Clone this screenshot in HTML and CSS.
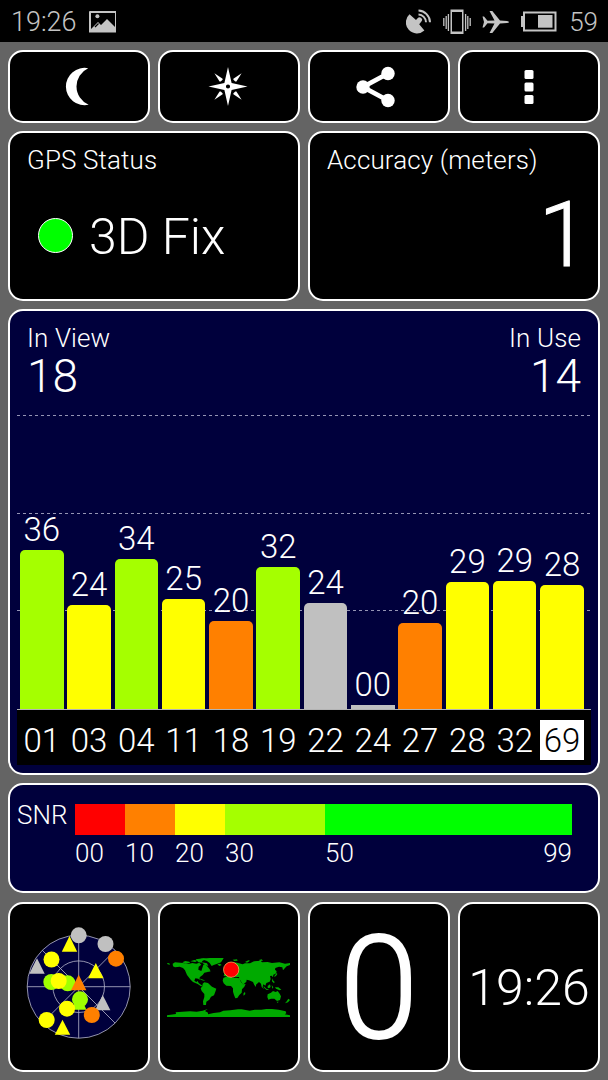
FILE: index.html
```html
<!DOCTYPE html>
<html lang="en">
<head>
    <meta charset="UTF-8">
    <meta name="viewport" content="width=device-width, initial-scale=1.0">
    <title>GPS Status</title>
    <link rel="stylesheet" href="styles.css">
</head>
<body>
    <div class="status-bar">
        <span class="clock">19:26</span>
        <svg class="icon-picture" width="28" height="22" viewBox="0 0 28 22">
            <path fill-rule="evenodd" d="M1 0H27V21.5H0V1Q0 0 1 0ZM2 2V18L9 11L12 14L18 8L26 16V2Z"/>
            <circle cx="8.4" cy="5.2" r="2"/>
            <path d="M6 16L9.5 12.5" stroke="#000" stroke-width="1.2"/>
        </svg>
        <div class="status-icons">
            <svg width="26" height="26" viewBox="0 0 26 26">
                <path d="M3.5 5.2A10.4 10.4 0 0 0 18.4 21.6L13.2 15.2L15.4 12.6A2.3 2.3 0 1 0 11.6 9.2L10 11Z"/>
                <path d="M12.5 5.5A8 8 0 0 1 20 13.2M12.5 1.5A12 12 0 0 1 24 13.2" fill="none" stroke="#c4c4c4" stroke-width="2"/>
            </svg>
            <svg class="icon-vibrate" width="28" height="26" viewBox="0 0 28 26">
                <path fill-rule="evenodd" d="M7.5 0.5H20.5V25H7.5ZM9 3V22.5H19V3Z"/>
                <path d="M0.8 9V17M3.2 7V20M5.4 5V22M27.2 9V17M24.8 7V20M22.6 5V22" stroke="#c4c4c4" stroke-width="1.3"/>
            </svg>
            <svg class="icon-plane" width="27" height="24" viewBox="0 0 27 24">
                <path d="M0.5 6.5H2L5.5 10.7L12.5 10.5L7.5 1H10.3L18 10.5L25 10.9Q27 11.2 27 12Q27 12.8 25 13.1L18 13.5L10.3 23H7.5L12.5 13.5L5.5 13.3L2 17.5H0.5L2 12Z"/>
            </svg>
            <svg class="icon-battery" width="36" height="22" viewBox="0 0 36 22">
                <path fill-rule="evenodd" d="M2 0.5H35.5V20.5H2V16H0V5H2ZM4 2.5V18.5H33.5V2.5Z"/>
                <rect x="17" y="4" width="14.5" height="12.7"/>
            </svg>
            <span class="battery-level">59</span>
        </div>
    </div>

    <div class="dashboard">
        <button class="card tool" type="button" aria-label="Night mode">
            <svg class="icon-moon" width="40" height="40" viewBox="0 0 40 40">
                <path d="M31.2 1.2A18.7 18.7 0 1 0 31.7 37.8A20 20 0 0 1 31.2 1.2Z"/>
            </svg>
        </button>
        <button class="card tool" type="button" aria-label="Compass">
            <svg class="icon-compass" width="40" height="40" viewBox="0 0 40 40">
                <path fill-rule="evenodd" d="M20 0L23.6 16L39.5 19.5L23.6 23L20 39L16.4 23L0.5 19.5L16.4 16ZM20 17.4A2.1 2.1 0 1 0 20 21.6A2.1 2.1 0 1 0 20 17.4Z"/>
                <path d="M6.4 6.2L14.6 11.7L14.6 12.7L12.7 14.6L11.6 14.6Z"/>
                <path d="M33.6 6.2L25.4 11.7L25.4 12.7L27.3 14.6L28.4 14.6Z"/>
                <path d="M6.4 32.8L14.6 27.3L14.6 26.3L12.7 24.4L11.6 24.4Z"/>
                <path d="M33.6 32.8L25.4 27.3L25.4 26.3L27.3 24.4L28.4 24.4Z"/>
            </svg>
        </button>
        <button class="card tool" type="button" aria-label="Share">
            <svg class="icon-share" width="40" height="42" viewBox="0 0 40 42">
                <path d="M32 7.5L7 21L32 34.5" fill="none" stroke="#fff" stroke-width="4.8"/>
                <circle cx="32" cy="7.5" r="6.7"/>
                <circle cx="7" cy="21" r="6.7"/>
                <circle cx="32" cy="34.5" r="6.7"/>
            </svg>
        </button>
        <button class="card tool" type="button" aria-label="Menu">
            <svg width="10" height="36" viewBox="0 0 10 36">
                <rect x="0.5" y="1" width="9" height="9" rx="1.5"/>
                <rect x="0.5" y="13.5" width="9" height="9" rx="1.5"/>
                <rect x="0.5" y="26" width="9" height="9" rx="1.5"/>
            </svg>
        </button>

        <div class="card info">
            <div class="title">GPS Status</div>
            <div class="fix"><span class="fix-dot"></span>3D Fix</div>
        </div>
        <div class="card info">
            <div class="title">Accuracy (meters)</div>
            <div class="accuracy">1</div>
        </div>

        <div class="card chart-card">
            <div class="chart-header">
                <div>
                    <div class="title">In View</div>
                    <div class="count">18</div>
                </div>
                <div class="in-use">
                    <div class="title">In Use</div>
                    <div class="count">14</div>
                </div>
            </div>
            <div class="plot" id="plot"></div>
            <div class="sat-ids" id="sat-ids"></div>
        </div>

        <div class="card snr-card">
            <div class="snr-label">SNR</div>
            <div class="scale">
                <div class="seg red"></div>
                <div class="seg orange"></div>
                <div class="seg yellow"></div>
                <div class="seg lime"></div>
                <div class="seg green"></div>
                <div>00</div>
                <div>10</div>
                <div>20</div>
                <div>30</div>
                <div class="scale-end"><span>50</span><span>99</span></div>
            </div>
        </div>

        <div class="card widget">
            <svg width="138" height="166" viewBox="10 904 138 166">
                <g class="sky">
                    <circle cx="78.7" cy="986.7" r="51.5"/>
                    <circle cx="78.7" cy="986.7" r="25.8"/>
                    <path d="M78.7 935.2V1038.2M27.2 986.7H130.2M42.3 950.3L115.1 1023.1M115.1 950.3L42.3 1023.1"/>
                </g>
                <circle class="s-lime" cx="51.3" cy="982" r="8"/>
                <circle class="s-lime" cx="67.7" cy="983.3" r="8"/>
                <circle class="s-yellow" cx="58.7" cy="981" r="8"/>
                <path class="s-lime" d="M79 994.3L86.5 1009.7H71.5Z"/>
                <circle class="s-lime" cx="80" cy="999.3" r="8"/>
                <path class="s-yellow" d="M69.5 936L77.2 951.7H61.8Z"/>
                <circle class="s-gray" cx="78.7" cy="935.3" r="8"/>
                <circle class="s-gray" cx="105.5" cy="944" r="8"/>
                <circle class="s-orange" cx="116" cy="958.7" r="8"/>
                <circle class="s-yellow" cx="51.5" cy="959.5" r="8"/>
                <path class="s-gray" d="M37 958.3L44.7 973.7H29.3Z"/>
                <path class="s-yellow" d="M95.8 963L103.5 978.3H88.1Z"/>
                <path class="s-orange" d="M78.7 974.8L86.4 990.3H71Z"/>
                <circle class="s-yellow" cx="67" cy="1008.7" r="8"/>
                <path class="s-gray" d="M102.7 995L110.4 1010.3H95Z"/>
                <circle class="s-orange" cx="91.8" cy="1015" r="8"/>
                <circle class="s-yellow" cx="46.7" cy="1020" r="8"/>
                <path class="s-yellow" d="M62.5 1019.7L70.2 1034.8H54.8Z"/>
            </svg>
        </div>
        <div class="card widget">
            <svg width="138" height="166" viewBox="15 27 414 498">
                <g class="land">
                    <!-- north america -->
                    <path d="M53 206L60 202L84 204L100 207L112 204L124 206L133 203L139 209L131 215L130 224L139 228L142 219L145 209L151 208L158 215L165 224L158 231L148 233L143 240L136 245L133 249L134 256L130 251L121 250L118 257L124 261L128 258L131 264L139 270L143 273L138 274L128 267L114 261L107 254L96 240L90 226L84 219L74 215L60 217L54 214ZM36 204L43 205L45 209L38 208Z"/>
                    <path d="M82 202L91 198L103 200L105 204L92 206ZM106 199L118 195L127 197L121 201ZM122 193L146 190L155 192L143 197L140 202L156 205L160 213L149 209L142 203L130 202ZM129 249L145 254L151 258L141 256ZM159 228L164 224L167 229L160 231Z"/>
                    <!-- greenland, iceland -->
                    <path d="M136 191L165 189L206 189L203 194L198 202L187 206L176 210L170 213L164 204L156 198ZM187 208L195 206L200 210L193 213Z"/>
                    <!-- south america -->
                    <path d="M143 266L148 262L159 264L166 271L171 275L184 281L181 290L177 301L168 305L163 314L154 320L153 330L145 330L144 319L148 306L148 297L140 288L137 280L142 274Z"/>
                    <!-- eurasia -->
                    <path d="M206 243L208 237L216 235L212 229L222 225L232 222L233 214L229 209L240 202L252 205L263 208L270 205L285 205L297 199L317 197L321 202L338 201L351 204L373 202L390 206L405 204L405 210L395 214L390 219L384 226L382 217L372 215L361 219L360 224L365 229L362 236L355 239L354 247L350 242L345 243L347 252L344 260L334 264L331 272L325 268L323 275L327 282L320 276L318 266L312 261L303 269L303 276L298 270L294 261L282 256L275 254L274 260L264 269L257 257L251 250L253 246L242 246L236 240L228 237L218 238L215 244Z"/>
                    <path d="M233 194L246 193L248 197L238 198ZM270 201L280 196L285 197L276 203ZM312 195L320 193L324 197L315 198ZM364 231L367 237L363 243L357 246L360 240L364 236ZM352 250L354 256L359 261L357 265L351 259ZM325 272L334 281L343 285L335 285L328 279ZM338 273L345 268L347 276L342 280L338 278ZM350 270L355 277L352 281ZM360 277L370 277L379 284L374 286L363 281Z"/>
                    <!-- africa -->
                    <path d="M205 249L216 244L228 243L231 248L244 248L253 250L258 261L264 268L272 267L268 275L261 283L260 293L253 300L247 309L241 310L237 300L234 290L234 280L228 273L214 272L206 265L203 257ZM270 290L271 297L266 302L265 296Z"/>
                    <!-- oceania -->
                    <path d="M338 298L348 293L354 288L362 291L368 288L374 296L378 304L375 315L366 318L358 311L348 311L340 314L337 306ZM365 320L371 320L368 324ZM400 311L405 315L399 322L390 325L394 320Z"/>
                    <!-- antarctica -->
                    <path d="M36 366V361L63 357L62 352L82 350L105 349L125 350L143 347L158 342L150 348L159 353L159 358L176 354L195 352L205 347L226 346L249 343L260 343L284 347L299 344L319 344L334 342L351 342L371 344L392 349L394 355L389 358L405 361V366Z"/>
                </g>
                <circle class="here" cx="228.5" cy="224" r="23"/>
            </svg>
        </div>
        <div class="card widget speed">0</div>
        <div class="card widget time">19:26</div>
    </div>

    <script>
        const satellites = [
            { id: "01", snr: "36", height: 159.5, color: "lime" },
            { id: "03", snr: "24", height: 104.5, color: "yellow" },
            { id: "04", snr: "34", height: 150.5, color: "lime" },
            { id: "11", snr: "25", height: 110, color: "yellow" },
            { id: "18", snr: "20", height: 88, color: "orange" },
            { id: "19", snr: "32", height: 142, color: "lime" },
            { id: "22", snr: "24", height: 106, color: "gray" },
            { id: "24", snr: "00", height: 4.5, color: "gray" },
            { id: "27", snr: "20", height: 86.5, color: "orange" },
            { id: "28", snr: "29", height: 127.5, color: "yellow" },
            { id: "32", snr: "29", height: 128.5, color: "yellow" },
            { id: "69", snr: "28", height: 124.5, color: "yellow", selected: true }
        ];

        const plot = document.getElementById("plot");
        const ids = document.getElementById("sat-ids");

        satellites.forEach(sat => {
            const column = document.createElement("div");
            column.classList.add("column");
            column.textContent = sat.snr;

            const bar = document.createElement("div");
            bar.classList.add("bar", sat.color);
            if (sat.snr === "00") {
                bar.classList.add("empty");
            }
            bar.style.height = sat.height + "px";
            column.appendChild(bar);
            plot.appendChild(column);

            const label = document.createElement("div");
            label.classList.add("sat-id");
            label.textContent = sat.id;
            if (sat.selected) {
                label.classList.add("selected");
            }
            ids.appendChild(label);
        });
    </script>
</body>
</html>
```
FILE: styles.css
```css
* {
    box-sizing: border-box;
}
body {
    margin: 0;
    width: 608px;
    height: 1080px;
    overflow: hidden;
    background-color: #646464;
    color: white;
    font-family: Roboto, "Liberation Sans", sans-serif;
    font-weight: 300;
    font-size: 26px;
    line-height: 1;
}
svg {
    display: block;
    fill: white;
}
.status-bar {
    display: flex;
    align-items: center;
    height: 42px;
    padding: 1px 10px 0 11px;
    background-color: black;
    color: #c4c4c4;
}
.status-bar svg {
    fill: #c4c4c4;
}
.clock {
    width: 78px;
    padding-top: 2px;
    font-size: 27px;
}
.status-icons {
    display: flex;
    align-items: center;
    margin-left: auto;
}
.icon-vibrate {
    margin-left: 11px;
}
.icon-plane {
    margin-left: 11px;
}
.icon-battery {
    margin-left: 12px;
}
.battery-level {
    margin-left: 12px;
    font-size: 26px;
}
.dashboard {
    display: grid;
    grid-template-columns: repeat(4, 142px);
    grid-template-rows: 73px 170px 466px 110px 170px;
    column-gap: 8px;
    row-gap: 8px;
    padding: 8px;
}
.card {
    border: 2px solid white;
    border-radius: 15px;
    background-color: black;
}
.tool {
    display: flex;
    align-items: center;
    justify-content: center;
    padding: 0;
}
.icon-moon {
    margin-right: 4px;
}
.icon-compass {
    margin-right: 2px;
}
.icon-share {
    margin-right: 6px;
}
.title {
    letter-spacing: 0.12px;
}
.info {
    grid-column: span 2;
    padding: 14px 17px 0;
}
.fix {
    display: flex;
    align-items: center;
    gap: 16px;
    margin-top: 39px;
    padding-left: 11px;
    font-size: 50px;
}
.fix-dot {
    width: 35px;
    height: 35px;
    margin-bottom: 3px;
    border: 1px solid white;
    border-radius: 50%;
    background-color: #00ff00;
}
.accuracy {
    margin: 17px -8px 0 0;
    font-size: 91px;
    text-align: right;
    -webkit-text-stroke: 1px white;
}
.chart-card {
    grid-column: span 4;
    padding: 14px 7px 0;
    background-color: #00003c;
}
.chart-header {
    display: flex;
    justify-content: space-between;
    height: 90px;
    padding: 0 10px;
}
.count {
    margin-top: 2px;
    font-size: 46px;
}
.in-use {
    text-align: right;
}
.plot {
    --dash: repeating-linear-gradient(90deg, #9494b4 0 3px, transparent 3px 6px);
    display: flex;
    gap: 3.8px;
    height: 295px;
    padding: 0 3px;
    border-bottom: 1px solid #b4b4b4;
    background-image: var(--dash), var(--dash), var(--dash);
    background-size: 100% 1px;
    background-position: 0 0, 0 98px, 0 195px;
    background-repeat: no-repeat;
}
.column {
    display: flex;
    flex-direction: column;
    justify-content: flex-end;
    width: 43.5px;
    font-size: 33px;
    text-align: center;
}
.bar {
    margin-top: 4px;
    border-radius: 5px 5px 0 0;
}
.empty {
    border-radius: 0;
}
.sat-ids {
    display: flex;
    align-items: center;
    gap: 3.8px;
    height: 55px;
    padding: 5px 3px 0;
    background-color: black;
    font-size: 33px;
}
.sat-id {
    width: 43.5px;
    height: 40px;
    line-height: 42px;
    text-align: center;
}
.selected {
    background-color: white;
    color: black;
}
.red {
    background-color: #ff0000;
}
.orange {
    background-color: #ff8000;
}
.yellow {
    background-color: #ffff00;
}
.lime {
    background-color: #a5ff00;
}
.green {
    background-color: #00ff00;
}
.gray {
    background-color: #c0c0c0;
}
.snr-card {
    grid-column: span 4;
    display: flex;
    padding: 17px 0 0 7px;
    background-color: #00003c;
}
.snr-label {
    width: 58px;
}
.scale {
    display: grid;
    grid-template-columns: 50px 50px 50px 100px 247px;
    grid-template-rows: 31px 26px;
    row-gap: 5px;
    margin-top: 2px;
}
.scale-end {
    display: flex;
    justify-content: space-between;
}
.widget {
    display: flex;
    align-items: center;
    justify-content: center;
    margin-top: 1px;
    height: 170px;
}
.sky {
    fill: #00003c;
    stroke: #b8b8cc;
    stroke-width: 0.8;
}
.s-gray {
    fill: #c0c0c0;
}
.s-yellow {
    fill: #ffff00;
}
.s-lime {
    fill: #a0ff00;
}
.s-orange {
    fill: #ff8000;
}
.land {
    fill: #00aa00;
}
.here {
    fill: #ff0000;
    stroke: #ffc864;
    stroke-width: 2;
}
.speed {
    padding-top: 5px;
    font-size: 142px;
    -webkit-text-stroke: 2px white;
}
.time {
    padding-top: 1px;
    font-size: 50px;
}
```
